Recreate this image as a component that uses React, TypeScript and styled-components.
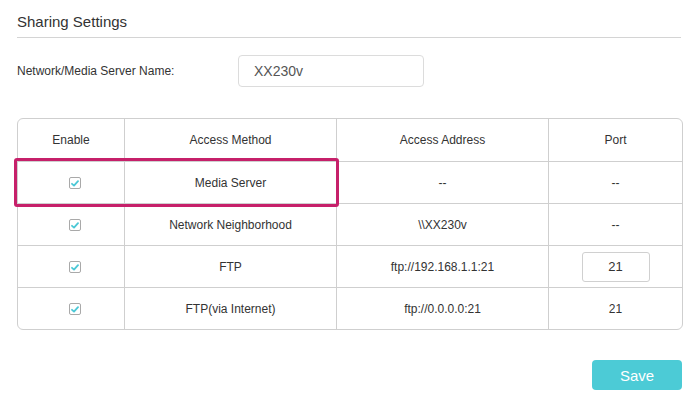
import React from "react";
import styled, { createGlobalStyle } from "styled-components";

const Global = createGlobalStyle`
  html, body { margin: 0; padding: 0; background: #fff; }
  body { font-family: "Liberation Sans", Arial, sans-serif; color: #333; }
`;

const Page = styled.div`
  width: 696px;
  box-sizing: border-box;
  padding: 0 15px 0 17px;
`;

const Title = styled.h2`
  margin: 0;
  padding: 13px 0 7px;
  font-size: 15px;
  line-height: 17px;
  font-weight: normal;
  color: #333;
  border-bottom: 1px solid #d4d4d4;
`;

const FormRow = styled.div`
  display: flex;
  align-items: center;
  margin-top: 17px;
`;

const Label = styled.label`
  width: 221px;
  font-size: 12px;
  color: #333;
`;

const NameInput = styled.input`
  box-sizing: border-box;
  width: 186px;
  height: 32px;
  border: 1px solid #dcdcdc;
  border-radius: 4px;
  padding: 0 0 0 15px;
  font-family: "Liberation Sans", Arial, sans-serif;
  font-size: 14px;
  color: #555;
  outline: none;
`;

const TableWrap = styled.div`
  position: relative;
  margin-top: 31px;
`;

const Table = styled.table`
  width: 664px;
  border-collapse: separate;
  border-spacing: 0;
  border: 1px solid #cfcfcf;
  border-radius: 6px;
  table-layout: fixed;
  font-size: 12px;
  color: #333;
`;

const Th = styled.th<{ $w: number; $last?: boolean }>`
  width: ${(p) => p.$w}px;
  height: 43px;
  box-sizing: border-box;
  font-weight: normal;
  text-align: center;
  vertical-align: middle;
  border-bottom: 1px solid #cfcfcf;
  border-right: ${(p) => (p.$last ? "none" : "1px solid #cfcfcf")};
  padding: 0;
`;

const Td = styled.td<{ $last?: boolean; $bottom?: boolean }>`
  height: ${(p) => (p.$bottom ? 41 : 42)}px;
  box-sizing: border-box;
  text-align: center;
  vertical-align: middle;
  padding: 0;
  border-bottom: ${(p) => (p.$bottom ? "none" : "1px solid #cfcfcf")};
  border-right: ${(p) => (p.$last ? "none" : "1px solid #cfcfcf")};
`;

const CheckBox = styled.span`
  display: inline-flex;
  align-items: center;
  justify-content: center;
  box-sizing: border-box;
  width: 12px;
  height: 12px;
  margin-left: 8px;
  border: 1px solid #a9a9a9;
  border-radius: 2px;
  background: #fff;
  vertical-align: middle;
`;

const PortInput = styled.input`
  box-sizing: border-box;
  width: 68px;
  height: 30px;
  border: 1px solid #d0d0d0;
  border-radius: 3px;
  text-align: center;
  font-family: "Liberation Sans", Arial, sans-serif;
  font-size: 13px;
  color: #333;
  outline: none;
  vertical-align: middle;
`;

const Highlight = styled.div`
  position: absolute;
  left: -3px;
  top: 40px;
  width: 325px;
  height: 49px;
  box-sizing: border-box;
  border: 3px solid #c6206a;
  border-radius: 3px;
  pointer-events: none;
`;

const Footer = styled.div`
  display: flex;
  justify-content: flex-end;
  margin-top: 30px;
`;

const SaveButton = styled.button`
  width: 90px;
  height: 30px;
  margin-right: -1px;
  border: none;
  border-radius: 4px;
  background: #4ccbd6;
  color: #fff;
  font-family: "Liberation Sans", Arial, sans-serif;
  font-size: 15px;
  cursor: pointer;
`;

const Check = () => (
  <CheckBox>
    <svg width="8" height="7" viewBox="0 0 8 7">
      <path d="M1 3.8 L3 5.6 L7 1.2" fill="none" stroke="#4bc8d6" strokeWidth="1.8" strokeLinecap="round" strokeLinejoin="round" />
    </svg>
  </CheckBox>
);

type Row = { method: string; address: string; port: React.ReactNode };

const rows: Row[] = [
  { method: "Media Server", address: "--", port: "--" },
  { method: "Network Neighborhood", address: "\\\\XX230v", port: "--" },
  { method: "FTP", address: "ftp://192.168.1.1:21", port: <PortInput defaultValue="21" /> },
  { method: "FTP(via Internet)", address: "ftp://0.0.0.0:21", port: "21" },
];

export default function App() {
  return (
    <>
      <Global />
      <Page>
        <Title>Sharing Settings</Title>
        <FormRow>
          <Label>Network/Media Server Name:</Label>
          <NameInput defaultValue="XX230v" />
        </FormRow>
        <TableWrap>
          <Table>
            <thead>
              <tr>
                <Th $w={107}>Enable</Th>
                <Th $w={212}>Access Method</Th>
                <Th $w={212}>Access Address</Th>
                <Th $w={133} $last>Port</Th>
              </tr>
            </thead>
            <tbody>
              {rows.map((r, i) => {
                const bottom = i === rows.length - 1;
                return (
                  <tr key={r.method}>
                    <Td $bottom={bottom}><Check /></Td>
                    <Td $bottom={bottom}>{r.method}</Td>
                    <Td $bottom={bottom}>{r.address}</Td>
                    <Td $bottom={bottom} $last>{r.port}</Td>
                  </tr>
                );
              })}
            </tbody>
          </Table>
          <Highlight />
        </TableWrap>
        <Footer>
          <SaveButton>Save</SaveButton>
        </Footer>
      </Page>
    </>
  );
}
